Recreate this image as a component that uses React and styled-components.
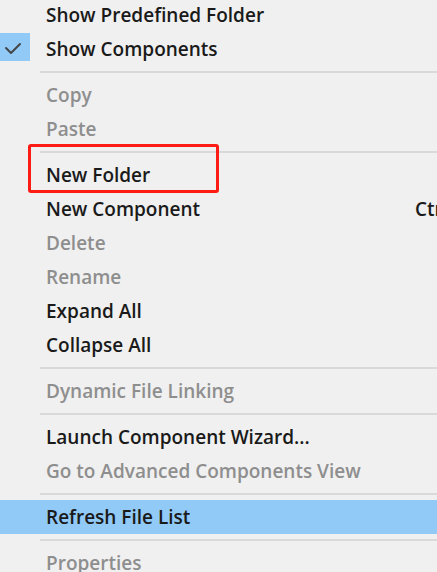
import React from "react";
import styled, { createGlobalStyle } from "styled-components";

const GlobalStyle = createGlobalStyle`
  html, body {
    margin: 0;
    padding: 0;
    background: #f0f0f0;
    overflow: hidden;
  }
`;

const Menu = styled.div`
  width: 520px;
  margin-top: -2px;
  background: #f0f0f0;
  font-family: "Open Sans", "Noto Sans", sans-serif;
  font-size: 19px;
  font-weight: 600;
  display: flex;
  flex-direction: column;
`;

const Row = styled.div`
  position: relative;
  height: 34px;
  display: flex;
  align-items: center;
  background: ${(p) => (p.$active ? "#91c9f7" : "transparent")};
  color: ${(p) => (p.$disabled ? "#8e8e8e" : "#1a1a1a")};
`;

const Gutter = styled.div`
  width: 46px;
  height: 100%;
  flex-shrink: 0;
  display: flex;
  align-items: flex-start;
`;

const CheckBox = styled.div`
  width: 30px;
  height: 28px;
  margin-top: 1px;
  background: #91c9f7;
  display: flex;
  align-items: center;
  justify-content: center;
`;

const Label = styled.span`
  width: 369px;
  flex-shrink: 0;
  white-space: nowrap;
`;

const Shortcut = styled.span`
  white-space: nowrap;
`;

const Separator = styled.div`
  height: 12px;
  display: flex;
  align-items: center;
  padding-left: 40px;

  &::after {
    content: "";
    flex: 1;
    height: 2px;
    background: #d9d9d9;
  }
`;

const Callout = styled.div`
  position: absolute;
  left: 28px;
  top: -14px;
  width: 191px;
  height: 49px;
  box-sizing: border-box;
  border: 3px solid #fe1b14;
  border-radius: 3px;
  pointer-events: none;
`;

const Check = () => (
  <svg width="30" height="28" viewBox="0 0 30 28">
    <polyline
      points="6,15 11,20 20,11"
      fill="none"
      stroke="#454545"
      strokeWidth="2"
      strokeLinecap="round"
      strokeLinejoin="round"
    />
  </svg>
);

const items = [
  { label: "Show Predefined Folder" },
  { label: "Show Components", checked: true },
  { sep: true },
  { label: "Copy", disabled: true },
  { label: "Paste", disabled: true },
  { sep: true },
  { label: "New Folder", callout: true },
  { label: "New Component", shortcut: "Ctrl+N" },
  { label: "Delete", disabled: true },
  { label: "Rename", disabled: true },
  { label: "Expand All" },
  { label: "Collapse All" },
  { sep: true },
  { label: "Dynamic File Linking", disabled: true },
  { sep: true },
  { label: "Launch Component Wizard..." },
  { label: "Go to Advanced Components View", disabled: true },
  { sep: true },
  { label: "Refresh File List", active: true },
  { sep: true },
  { label: "Properties", disabled: true },
];

export default function App() {
  return (
    <>
      <GlobalStyle />
      <Menu>
        {items.map((item, i) =>
          item.sep ? (
            <Separator key={i} />
          ) : (
            <Row key={i} $disabled={item.disabled} $active={item.active}>
              <Gutter>
                {item.checked && (
                  <CheckBox>
                    <Check />
                  </CheckBox>
                )}
              </Gutter>
              <Label>{item.label}</Label>
              {item.shortcut && <Shortcut>{item.shortcut}</Shortcut>}
              {item.callout && <Callout />}
            </Row>
          )
        )}
      </Menu>
    </>
  );
}
